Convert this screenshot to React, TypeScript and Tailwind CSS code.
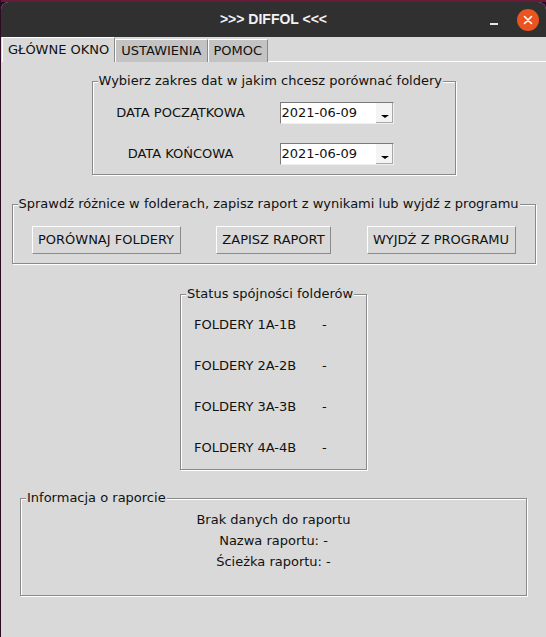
import React from "react";

const FONT = "font-['DejaVu_Sans',sans-serif]";

function Group({
  label,
  className,
  children,
}: {
  label: string;
  className: string;
  children: React.ReactNode;
}) {
  return (
    <div
      className={`relative border border-[#8a8a8a] shadow-[1px_1px_0_#ffffff,inset_1px_1px_0_#ffffff] ${className}`}
    >
      <span className="absolute -top-[9px] left-[5px] bg-[#d9d9d9] px-px leading-[16px]">
        {label}
      </span>
      {children}
    </div>
  );
}

function Combo({ value }: { value: string }) {
  return (
    <div className="flex h-[22px] w-[114px] border border-t-[#7a7a7a] border-l-[#7a7a7a] border-b-[#f0f0f0] border-r-[#f0f0f0] bg-white">
      <span className="flex-1 pl-[1px] leading-[20px]">{value}</span>
      <span className="relative w-[17px] border-r border-b border-[#a8a8a8] bg-[#f4f4f4]">
        <span className="absolute bottom-[4px] left-[5px] h-0 w-0 border-x-[4px] border-t-[3px] border-x-transparent border-t-black" />
      </span>
    </div>
  );
}

function Btn({ label, w }: { label: string; w: string }) {
  return (
    <button
      className={`h-[28px] ${w} border border-t-white border-l-white border-b-[#8a8a8a] border-r-[#8a8a8a] bg-[#d9d9d9] text-center leading-[26px]`}
    >
      {label}
    </button>
  );
}

const FOLDERS = ["FOLDERY 1A-1B", "FOLDERY 2A-2B", "FOLDERY 3A-3B", "FOLDERY 4A-4B"];

export default function App() {
  return (
    <div className={`h-[637px] w-[546px] bg-[#2e0b24] pl-[1px] pt-[2px] text-[13px] text-[#111111] ${FONT}`}>
      <div className="-mt-[2px] h-[2px] bg-[#6a1a39]" />
      <div className="flex h-[635px] flex-col overflow-hidden rounded-t-[8px] bg-[#d9d9d9]">
        {/* title bar */}
        <div className="relative flex h-[35px] items-center justify-center bg-[#303030] font-['Liberation_Sans',sans-serif] text-[14px] font-bold text-[#f2f2f2]">
          &gt;&gt;&gt; DIFFOL &lt;&lt;&lt;
          <span className="absolute right-[48px] top-[21px] h-[2px] w-[8px] bg-[#e8e8e8]" />
          <span className="absolute right-[7px] top-[7px] flex h-[22px] w-[22px] items-center justify-center rounded-full bg-[#e95420]">
            <svg width="10" height="10" viewBox="0 0 10 10">
              <path d="M1.5 1.5 L8.5 8.5 M8.5 1.5 L1.5 8.5" stroke="#fff" strokeWidth="1.6" strokeLinecap="round" />
            </svg>
          </span>
        </div>

        {/* tabs */}
        <div className="flex h-[25px] items-end pl-[1px]">
          <div className="h-[25px] border border-b-0 border-t-white border-l-white border-r-[#8a8a8a] bg-[#d9d9d9] px-[5px] leading-[24px]">
            GŁÓWNE OKNO
          </div>
          <div className="h-[23px] border border-b-0 border-t-white border-l-white border-r-[#8a8a8a] bg-[#c3c3c3] px-[5px] leading-[22px]">
            USTAWIENIA
          </div>
          <div className="h-[23px] border border-b-0 border-t-white border-l-white border-r-[#8a8a8a] bg-[#c3c3c3] px-[5px] leading-[22px]">
            POMOC
          </div>
          <div className="flex-1 border-b border-white" />
        </div>

        {/* content */}
        <div className="flex flex-col items-center pt-[19px]">
          <Group label="Wybierz zakres dat w jakim chcesz porównać foldery" className="h-[94px] w-[364px]">
            <div className="grid grid-cols-[168px_auto] items-center gap-x-[15px] gap-y-[19px] pl-[4px] pt-[20px]">
              <span className="text-center">DATA POCZĄTKOWA</span>
              <Combo value="2021-06-09" />
              <span className="text-center">DATA KOŃCOWA</span>
              <Combo value="2021-06-09" />
            </div>
          </Group>

          <Group
            label="Sprawdź różnice w folderach, zapisz raport z wynikami lub wyjdź z programu"
            className="mt-[29px] h-[60px] w-[524px]"
          >
            <div className="flex justify-between px-[19px] pt-[21px]">
              <Btn label="PORÓWNAJ FOLDERY" w="w-[149px]" />
              <Btn label="ZAPISZ RAPORT" w="w-[115px]" />
              <Btn label="WYJDŹ Z PROGRAMU" w="w-[149px]" />
            </div>
          </Group>

          <Group label="Status spójności folderów" className="mt-[30px] h-[176px] w-[187px]">
            <div className="flex flex-col gap-[25px] pl-[13px] pt-[22px]">
              {FOLDERS.map((f) => (
                <div key={f} className="flex leading-[16px]">
                  <span className="w-[128px]">{f}</span>
                  <span>-</span>
                </div>
              ))}
            </div>
          </Group>

          <Group label="Informacja o raporcie" className="mt-[28px] h-[98px] w-[507px]">
            <div className="flex flex-col items-center pt-[10px] leading-[21px]">
              <span>Brak danych do raportu</span>
              <span>Nazwa raportu: -</span>
              <span>Ścieżka raportu: -</span>
            </div>
          </Group>
        </div>
      </div>
    </div>
  );
}
